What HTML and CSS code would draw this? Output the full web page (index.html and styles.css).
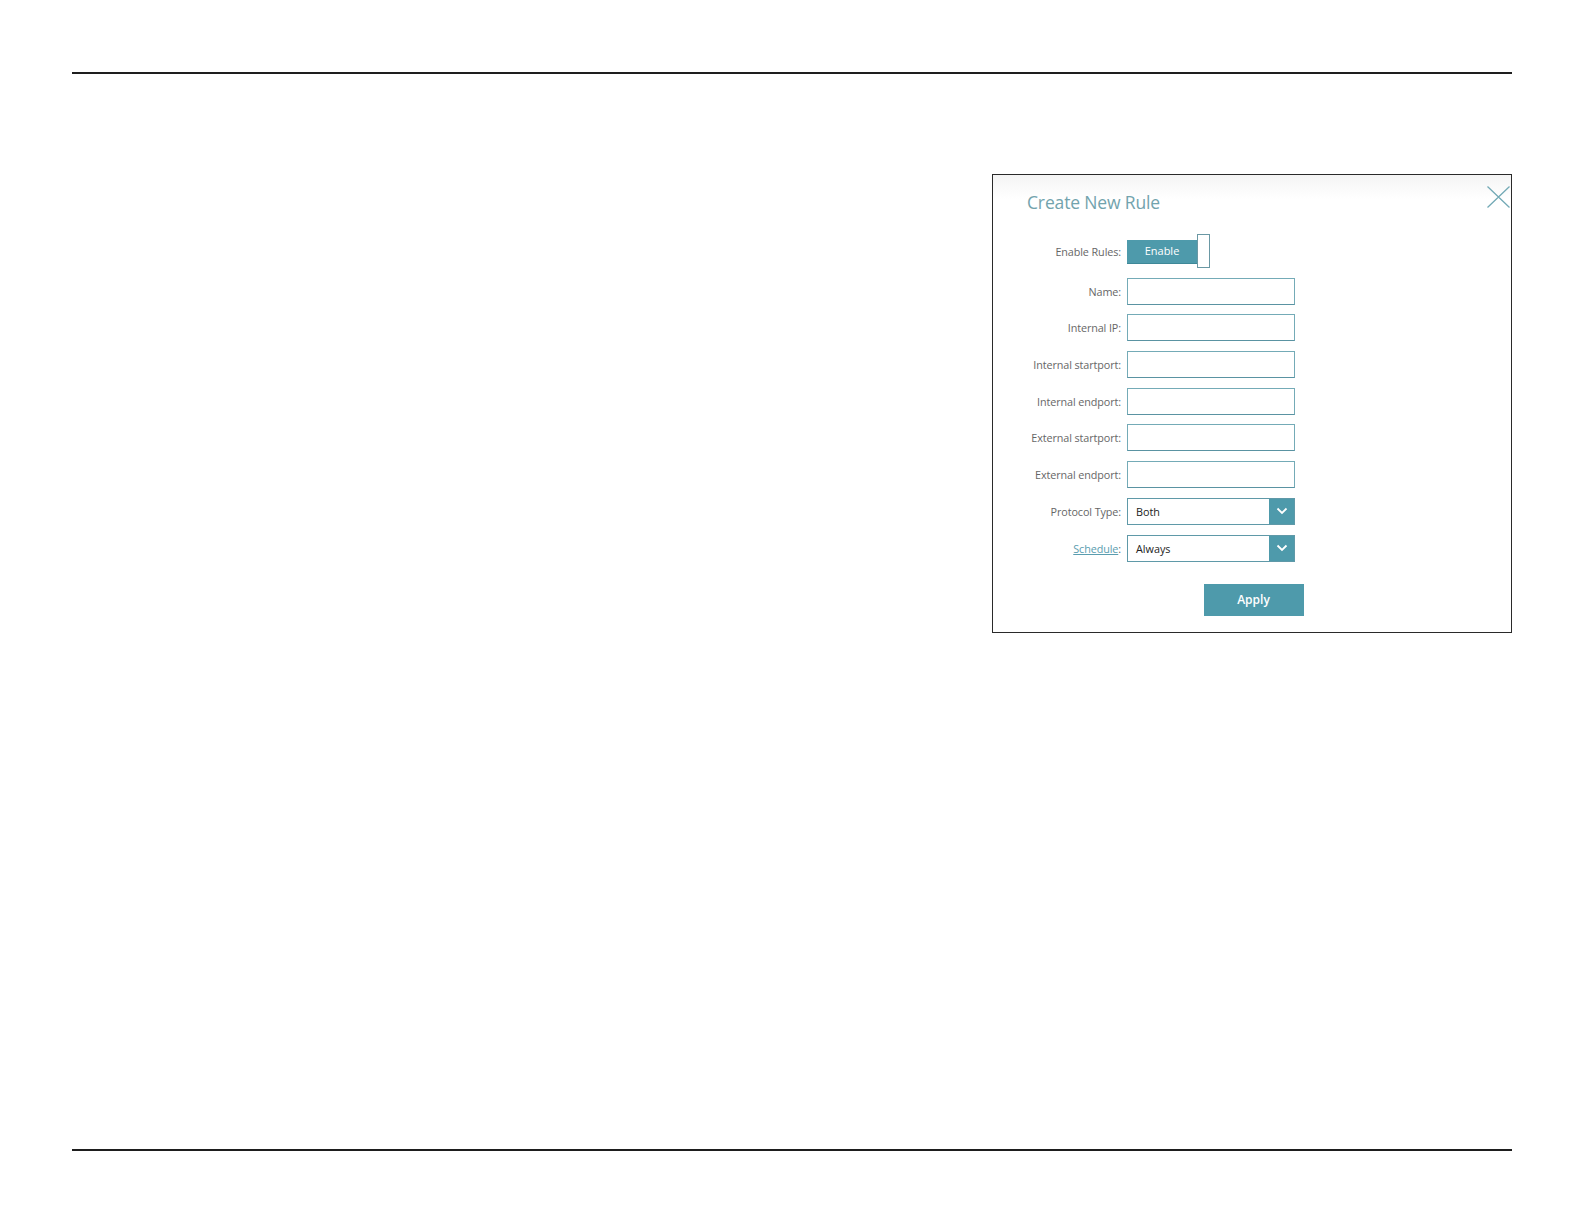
FILE: index.html
```html
<!DOCTYPE html>
<html>
<head>
<meta charset="utf-8">
<link rel="stylesheet" href="styles.css">
</head>
<body>
<div class="page">
  <div class="rule-line"></div>
  <div class="content">
    <div class="dialog">
      <div class="dialog-head">
        <h1 class="title">Create New Rule</h1>
        <svg class="close" width="23" height="22" viewBox="0 0 23 22"><path d="M0.5 0.5 L22.5 21.5 M22.5 0.5 L0.5 21.5" stroke="#72a9b5" stroke-width="1.3" fill="none"/></svg>
      </div>
      <div class="form">
        <div class="label">Enable Rules:</div>
        <div class="toggle"><span class="toggle-on">Enable</span><span class="toggle-knob"></span></div>

        <div class="label">Name:</div>
        <div class="input"></div>

        <div class="label">Internal IP:</div>
        <div class="input"></div>

        <div class="label">Internal startport:</div>
        <div class="input"></div>

        <div class="label">Internal endport:</div>
        <div class="input"></div>

        <div class="label">External startport:</div>
        <div class="input"></div>

        <div class="label">External endport:</div>
        <div class="input"></div>

        <div class="label">Protocol Type:</div>
        <div class="select"><span class="select-val">Both</span><span class="select-arrow"><svg width="12" height="8" viewBox="0 0 12 8"><path d="M1.5 1.5 L6 6 L10.5 1.5" stroke="#fff" stroke-width="1.8" fill="none"/></svg></span></div>

        <div class="label"><a class="link" href="#">Schedule</a>:</div>
        <div class="select"><span class="select-val">Always</span><span class="select-arrow"><svg width="12" height="8" viewBox="0 0 12 8"><path d="M1.5 1.5 L6 6 L10.5 1.5" stroke="#fff" stroke-width="1.8" fill="none"/></svg></span></div>
      </div>
      <div class="actions"><button class="apply">Apply</button></div>
    </div>
  </div>
  <div class="rule-line"></div>
</div>
</body>
</html>
```

FILE: styles.css
```css
html, body {
  margin: 0;
  padding: 0;
  background: #fff;
}
body {
  font-family: "Open Sans", "Liberation Sans", sans-serif;
}
.page {
  padding: 72px 72px 0 72px;
}
.rule-line {
  height: 2px;
  background: #1e1e1e;
}
.content {
  height: 1075px;
  display: flex;
  justify-content: flex-end;
  align-items: flex-start;
}
.dialog {
  margin-top: 100px;
  width: 518px;
  border: 1px solid #2a2a2a;
  background: linear-gradient(#f4f4f4 0px, #fff 24px);
  padding-bottom: 16px;
}
.dialog-head {
  display: flex;
  justify-content: space-between;
  align-items: flex-start;
  padding: 11px 1px 0 34px;
  height: 26px;
}
.title {
  margin: 6px 0 0 0;
  font-size: 17.5px;
  font-weight: 400;
  color: #72a3ad;
  letter-spacing: -0.15px;
  line-height: 20px;
}
.close {
  display: block;
}
.form {
  display: grid;
  grid-template-columns: 128px 168px;
  column-gap: 6px;
  row-gap: 9.7px;
  grid-template-rows: 34px;
  grid-auto-rows: 27px;
  align-items: center;
  margin-top: 22px;
}
.label {
  text-align: right;
  font-size: 10.8px;
  color: #666;
  letter-spacing: -0.1px;
  white-space: nowrap;
}
.link {
  color: #5a9daf;
  text-decoration: underline;
}
.toggle {
  display: flex;
  align-items: center;
  height: 34px;
}
.toggle-on {
  width: 70px;
  height: 23px;
  background: #4e9aab;
  color: #fff;
  font-size: 11px;
  line-height: 22px;
  text-align: center;
  box-shadow: 0 1px 0 #3e8898;
}
.toggle-knob {
  width: 11px;
  height: 32px;
  border: 1px solid #6a98a4;
  background: #fff;
}
.input {
  height: 25px;
  border: 1px solid #74abb7;
  border-bottom-color: #5a93a2;
  background: #fff;
}
.select {
  height: 25px;
  border: 1px solid #5f99a8;
  background: #fff;
  display: flex;
}
.select-val {
  flex: 1;
  font-size: 10.8px;
  color: #222;
  line-height: 25px;
  padding-left: 8px;
}
.select-arrow {
  width: 25px;
  background: #4e9aab;
  display: flex;
  align-items: center;
  justify-content: center;
}
.actions {
  display: flex;
  justify-content: center;
  padding-left: 3px;
  margin-top: 22px;
}
.apply {
  width: 100px;
  height: 32px;
  border: none;
  background: #4e9aab;
  color: #fff;
  font-family: "Open Sans", "Liberation Sans", sans-serif;
  font-size: 12px;
  font-weight: 600;
  padding: 0;
}
```
